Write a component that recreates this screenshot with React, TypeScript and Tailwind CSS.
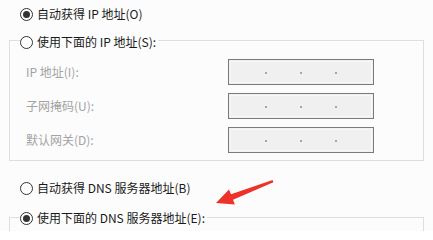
import React from 'react';

const font = { fontFamily: '"Noto Sans CJK SC", "Noto Sans", sans-serif' };

function Radio({ checked }: { checked?: boolean }) {
  return (
    <span className="flex h-[13px] w-[13px] shrink-0 items-center justify-center rounded-full border border-[#333] bg-white">
      {checked && <span className="h-[7px] w-[7px] rounded-full bg-[#333]" />}
    </span>
  );
}

function RadioRow({ checked, label, className = '' }: { checked?: boolean; label: string; className?: string }) {
  return (
    <div className={`flex h-[16px] items-center gap-[4px] text-[12px] leading-[16px] text-[#1a1a1a] ${className}`}>
      <Radio checked={checked} />
      <span>{label}</span>
    </div>
  );
}

function IpBox() {
  return (
    <div className="h-[26px] w-[146px] border border-[#7a7a7a] bg-[#f0f0f0] p-[1px]">
      <div className="grid h-full grid-cols-4 border border-[#f7f7f7]">
        {[0, 1, 2, 3].map((i) => (
          <div key={i} className="relative">
            {i < 3 && (
              <span className="absolute right-0 top-[10px] h-[2px] w-[2px] translate-x-[1px] rounded-full bg-[#8f8f8f]" />
            )}
          </div>
        ))}
      </div>
    </div>
  );
}

const rows = ['IP 地址(I):', '子网掩码(U):', '默认网关(D):'];

export default function App() {
  return (
    <div className="relative h-[231px] w-[433px] overflow-hidden bg-[#fcfcfc] leading-none" style={font}>
      <div className="h-[6px]" />
      <RadioRow checked label="自动获得 IP 地址(O)" className="ml-[20px]" />

      <div className="mx-[9px] mt-[18px] border border-[#dedede] shadow-[inset_1px_1px_0_#ffffff]">
        <div className="-mt-[7px] ml-[10px] flex w-fit bg-[#fcfcfc] pr-[2px]">
          <RadioRow label="使用下面的 IP 地址(S):" />
        </div>
        <div className="mt-[9px] flex flex-col gap-[8px] pb-[7px]">
          {rows.map((r) => (
            <div key={r} className="flex h-[26px] items-center">
              <span className="w-[218px] pl-[16px] text-[12px] leading-[16px] text-[#a3a3a3]">{r}</span>
              <IpBox />
            </div>
          ))}
        </div>
      </div>

      <RadioRow label="自动获得 DNS 服务器地址(B)" className="ml-[20px] mt-[19px]" />

      <div className="mx-[9px] mt-[21px] h-[20px] border-l border-r border-t border-[#dedede]">
        <div className="-mt-[8px] ml-[10px] flex w-fit bg-[#fcfcfc] pr-[2px]">
          <RadioRow checked label="使用下面的 DNS 服务器地址(E):" />
        </div>
      </div>

      <svg className="absolute left-0 top-0" width="433" height="231" viewBox="0 0 433 231">
        <polygon
          points="216,203 229,189.5 231,194.2 272.6,180 273.4,182.2 233,199.8 234.8,204.5"
          fill="#ee3229"
        />
      </svg>
    </div>
  );
}
